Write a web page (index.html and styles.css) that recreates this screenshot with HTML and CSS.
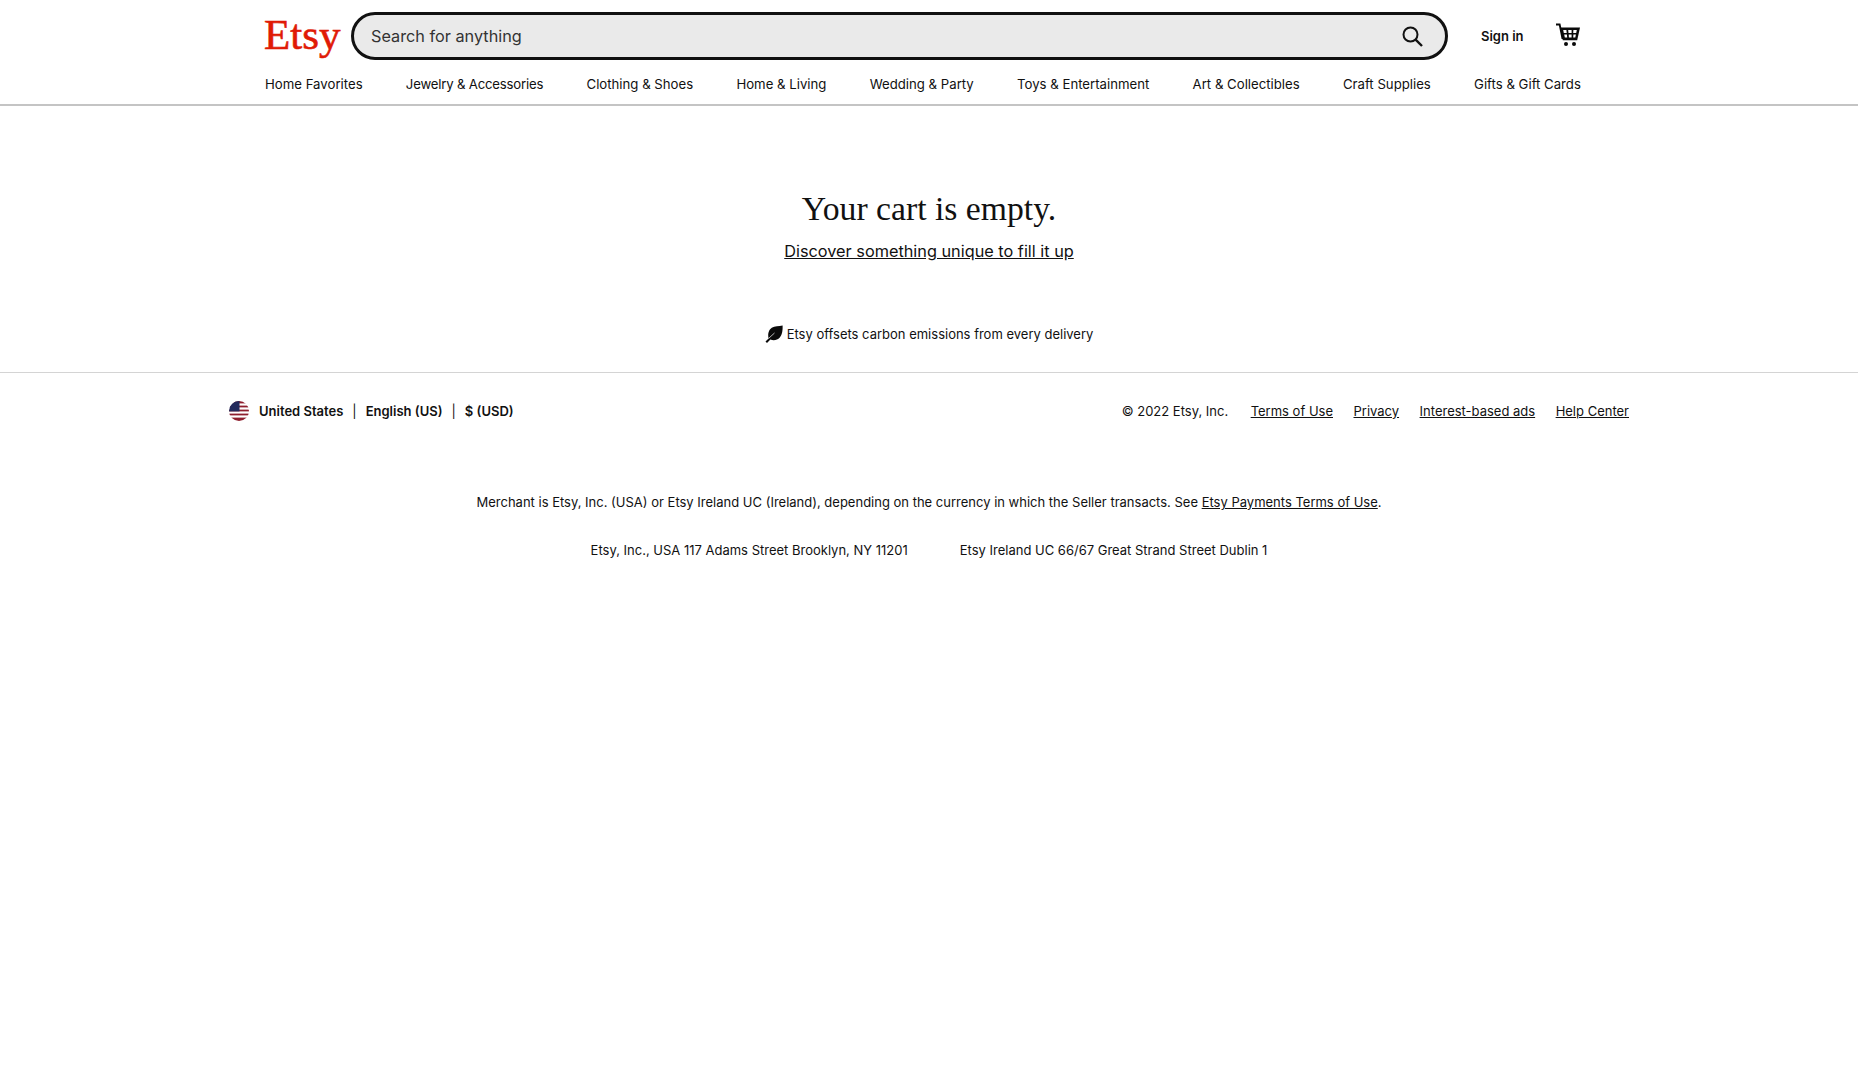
FILE: index.html
```html
<!DOCTYPE html>
<html lang="en">
<head>
  <meta charset="UTF-8">
  <title>Etsy - Your cart</title>
  <link rel="stylesheet" href="styles.css">
</head>
<body>
  <!-- Header -->
  <header class="site-header">
    <div class="header-inner">
      <div class="top-row">
        <a class="logo" href="#">Etsy</a>
        <form class="search">
          <span class="search-text">Search for anything</span>
          <svg class="search-icon" viewBox="0 0 24 24" width="24" height="24">
            <circle cx="10.5" cy="10.5" r="7" fill="none" stroke="#111" stroke-width="2"/>
            <path d="M15.6 15.6L22 22" fill="none" stroke="#111" stroke-width="2.4"/>
          </svg>
        </form>
        <a class="sign-in" href="#">Sign in</a>
        <svg class="cart-icon" viewBox="0 0 24 24" width="24" height="24">
          <path d="M0 0.5h4.4l3.2 15.5h-2L2.9 2.6H0z" fill="#0a0a0a"/>
          <path d="M4 4.5h20l-2.8 12.8H6.8z" fill="#0a0a0a"/>
          <path d="M7.2 7h3.2l.3 3H7.8zM12.2 7h3.4v3h-3.1zM17.4 7h3.4l-.6 3h-3zM8.2 11.6h2.7l.3 2.8H8.8zM12.7 11.6h2.9v2.8h-2.7zM17.4 11.6h2.5l-.6 2.8h-2.1z" fill="#fff"/>
          <circle cx="10" cy="21" r="2" fill="#0a0a0a"/>
          <circle cx="18" cy="21" r="2" fill="#0a0a0a"/>
        </svg>
      </div>
      <nav class="cat-nav">
        <a href="#">Home Favorites</a>
        <a class="tight" href="#">Jewelry &amp; Accessories</a>
        <a href="#">Clothing &amp; Shoes</a>
        <a href="#">Home &amp; Living</a>
        <a href="#">Wedding &amp; Party</a>
        <a href="#">Toys &amp; Entertainment</a>
        <a href="#">Art &amp; Collectibles</a>
        <a href="#">Craft Supplies</a>
        <a href="#">Gifts &amp; Gift Cards</a>
      </nav>
    </div>
  </header>

  <!-- Empty cart -->
  <main class="cart-empty">
    <h1>Your cart is empty.</h1>
    <a class="discover" href="#">Discover something unique to fill it up</a>
    <p class="carbon">
      <svg viewBox="0 0 18 18" width="18" height="18">
        <path d="M0.5 16.6L3.6 13.4C2.6 9.4 3.4 5 6.8 2.8C9.8 0.9 13.8 1.4 17.6 0.4C17.8 4.6 17.4 9.4 14.8 12.4C12.4 15.2 8.8 15.8 5.4 14.6L2 18z" fill="#0a0a0a"/>
        <path d="M3.6 13.4L9.5 8" stroke="#fff" stroke-width="0.7" fill="none"/>
      </svg>
      Etsy offsets carbon emissions from every delivery
    </p>
  </main>

  <!-- Footer -->
  <footer class="site-footer">
    <div class="footer-row">
      <div class="locale">
        <svg class="flag" viewBox="0 0 20 20" width="20" height="20">
          <defs><clipPath id="flag-clip"><circle cx="10" cy="10" r="10"/></clipPath></defs>
          <g clip-path="url(#flag-clip)">
            <rect width="20" height="20" fill="#fff"/>
            <rect y="0" width="20" height="2.4" fill="#8e1f2e"/>
            <rect y="4.6" width="20" height="1.8" fill="#8e1f2e"/>
            <rect y="8.6" width="20" height="1.8" fill="#8e1f2e"/>
            <rect y="12.6" width="20" height="1.8" fill="#8e1f2e"/>
            <rect y="16.6" width="20" height="3.4" fill="#8e1f2e"/>
            <rect width="10.5" height="10.4" fill="#232a5c"/>
          </g>
        </svg>
        <span>United States</span><span class="sep">|</span><span>English (US)</span><span class="sep">|</span><span>$ (USD)</span>
      </div>
      <div class="legal">
        <span class="copy">© 2022 Etsy, Inc.</span>
        <a href="#">Terms of Use</a>
        <a href="#">Privacy</a>
        <a href="#">Interest-based ads</a>
        <a href="#">Help Center</a>
      </div>
    </div>
    <p class="merchant">Merchant is Etsy, Inc. (USA) or Etsy Ireland UC (Ireland), depending on the currency in which the Seller transacts. See <a href="#">Etsy Payments Terms of Use</a>.</p>
    <p class="addresses">
      <span>Etsy, Inc., USA 117 Adams Street Brooklyn, NY 11201</span>
      <span>Etsy Ireland UC 66/67 Great Strand Street Dublin 1</span>
    </p>
  </footer>
</body>
</html>
```

FILE: styles.css
```css
body {
  margin: 0;
  background: #fff;
  color: #111;
  font-family: Inter, "Liberation Sans", sans-serif;
  font-size: 13px;
}

a {
  color: inherit;
}

/* Header */
.site-header {
  height: 104px;
  border-bottom: 2px solid #c4c4c4;
}

.header-inner {
  width: 1317px;
  margin-left: 264px;
}

.top-row {
  display: flex;
  align-items: center;
  height: 72px;
}

.logo {
  width: 87px;
  margin-top: -3px;
  font-family: "Liberation Serif", serif;
  font-size: 43px;
  line-height: 48px;
  color: #e01a06;
  text-decoration: none;
  -webkit-text-stroke: 0.6px #e01a06;
}

.search {
  box-sizing: border-box;
  width: 1097px;
  height: 48px;
  border: 3px solid #111;
  border-radius: 24px;
  background: #eaeaea;
  display: flex;
  align-items: center;
  justify-content: space-between;
  padding: 0 21px 0 17px;
}

.search-text {
  font-size: 16.25px;
  color: #333;
}

.sign-in {
  margin-left: 33px;
  margin-top: -1px;
  font-size: 13px;
  font-weight: 600;
  text-decoration: none;
}

.cart-icon {
  margin-left: 32px;
  margin-top: -2px;
}

.cat-nav {
  display: flex;
  justify-content: space-between;
  font-size: 13.2px;
  line-height: 24px;
  padding-left: 1px;
}

.cat-nav a {
  text-decoration: none;
}

.cat-nav .tight {
  letter-spacing: -0.2px;
}

/* Empty cart */
.cart-empty {
  text-align: center;
  height: 265px;
  border-bottom: 1px solid #d4d4d4;
  padding-top: 1px;
}

.cart-empty h1 {
  margin: 82px 0 0;
  font-family: "Liberation Serif", serif;
  font-size: 33.7px;
  line-height: 40px;
  font-weight: 400;
}

.discover {
  display: inline-block;
  margin-top: 10px;
  font-size: 16.3px;
  line-height: 24px;
}

.carbon {
  display: flex;
  align-items: center;
  justify-content: center;
  gap: 4px;
  margin: 61px 0 0;
  font-size: 13px;
  line-height: 20px;
}

/* Footer */
.footer-row {
  display: flex;
  justify-content: space-between;
  align-items: center;
  width: 1400px;
  margin: 22px 0 0 229px;
  height: 32px;
}

.locale {
  display: flex;
  align-items: center;
  font-weight: 600;
  font-size: 13px;
}

.flag {
  margin-right: 10px;
}

.sep {
  margin: 0 9px;
  font-weight: 400;
}

.legal {
  display: flex;
  align-items: center;
  gap: 20.5px;
}

.copy {
  margin-right: 2px;
}

.merchant {
  margin: 65px 0 0;
  text-align: center;
  line-height: 20px;
}

.addresses {
  display: flex;
  justify-content: center;
  gap: 52px;
  margin: 28px 0 0;
  line-height: 20px;
}
```
